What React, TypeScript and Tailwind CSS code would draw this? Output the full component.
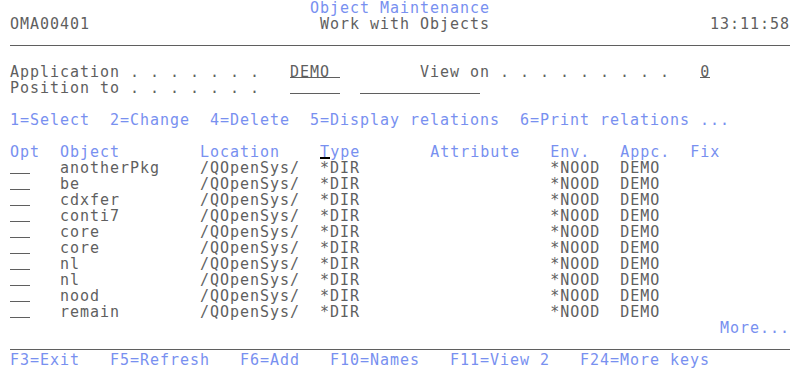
import React from "react";

type Seg = { col: number; node: React.ReactNode; len: number };

const BLUE = "text-[#7890f0]";

// one 80-column terminal row, segments placed at their column
function Row({ segs = [] }: { segs?: Seg[] }) {
  const out: React.ReactNode[] = [];
  let at = 0;
  segs.forEach((s, i) => {
    if (s.col > at) out.push(" ".repeat(s.col - at));
    out.push(<React.Fragment key={i}>{s.node}</React.Fragment>);
    at = s.col + s.len;
  });
  return <div className="h-4 whitespace-pre">{out}</div>;
}

const t = (col: number, text: string, cls = ""): Seg => ({
  col,
  len: text.length,
  node: cls ? <span className={cls}>{text}</span> : text,
});

const field = (col: number, text: string, len: number, w: string): Seg => ({
  col,
  len,
  node: (
    <span className={`inline-block align-top h-[14px] border-b border-[#5f5f5f] ${w}`}>{text}</span>
  ),
});

function Rule() {
  return (
    <div className="h-4 px-[10px] pt-[13px]">
      <div className="h-px bg-[#5f5f5f]" />
    </div>
  );
}

const OBJECTS = ["anotherPkg", "be", "cdxfer", "conti7", "core", "core", "nl", "nl", "nood", "remain"];

export default function App() {
  return (
    <div
      className="w-[800px] h-[384px] bg-white text-[#5f5f5f] text-[15px] leading-4 tracking-[0.97px] overflow-hidden"
      style={{ fontFamily: '"DejaVu Sans Mono", monospace' }}
    >
      <Row segs={[t(31, "Object Maintenance", BLUE)]} />
      <Row segs={[t(1, "OMA00401"), t(32, "Work with Objects"), t(71, "13:11:58")]} />
      <Rule />
      <Row />
      <Row
        segs={[
          t(1, "Application . . . . . . ."),
          field(29, "DEMO ", 5, "w-[50px]"),
          t(42, "View on . . . . . . . . ."),
          field(70, "0", 1, "w-[10px]"),
        ]}
      />
      <Row
        segs={[
          t(1, "Position to . . . . . . ."),
          field(29, "", 5, "w-[50px]"),
          field(36, "", 12, "w-[120px]"),
        ]}
      />
      <Row />
      <Row
        segs={[
          t(1, "1=Select  2=Change  4=Delete  5=Display relations  6=Print relations ...", BLUE),
        ]}
      />
      <Row />
      <Row
        segs={[
          t(1, "Opt", BLUE),
          t(6, "Object", BLUE),
          t(20, "Location", BLUE),
          {
            col: 32,
            len: 4,
            node: (
              <span className={BLUE}>
                <span className="inline-block align-top h-[15px] border-b-2 border-black">T</span>ype
              </span>
            ),
          },
          t(43, "Attribute", BLUE),
          t(55, "Env.", BLUE),
          t(62, "Appc.", BLUE),
          t(69, "Fix", BLUE),
        ]}
      />
      {OBJECTS.map((name, i) => (
        <Row
          key={i}
          segs={[
            field(1, "", 2, "w-[20px]"),
            t(6, name),
            t(20, "/QOpenSys/"),
            t(32, "*DIR"),
            t(55, "*NOOD"),
            t(62, "DEMO"),
          ]}
        />
      ))}
      <Row segs={[t(72, "More...", BLUE)]} />
      <Rule />
      <Row
        segs={[
          t(1, "F3=Exit   F5=Refresh   F6=Add   F10=Names   F11=View 2   F24=More keys", BLUE),
        ]}
      />
      <Row />
    </div>
  );
}
